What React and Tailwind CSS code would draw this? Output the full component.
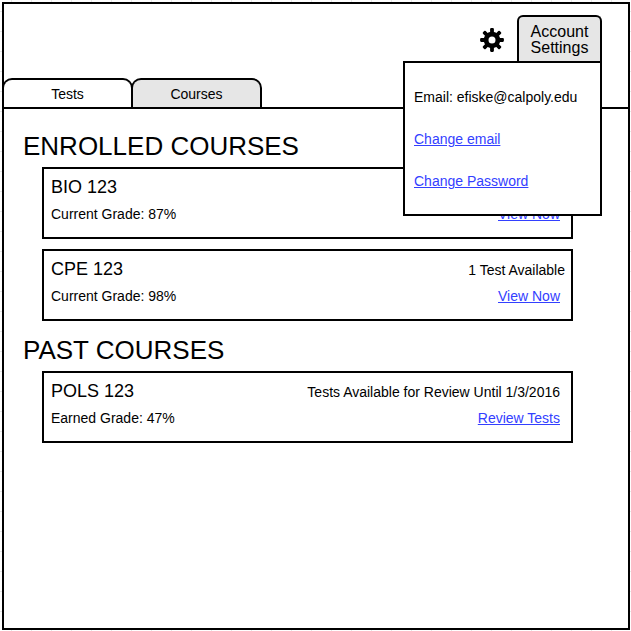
const enrolled = [
  { name: "BIO 123", grade: "Current Grade: 87%", action: "View Now" },
  { name: "CPE 123", grade: "Current Grade: 98%", note: "1 Test Available", action: "View Now" },
];

const past = [
  {
    name: "POLS 123",
    grade: "Earned Grade: 47%",
    note: "Tests Available for Review Until 1/3/2016",
    noteInset: true,
    action: "Review Tests",
  },
];

const linkStyle = "text-[#3340ff] underline underline-offset-1";

function GearIcon() {
  return (
    <svg width="24" height="24" viewBox="0 0 24 24" aria-hidden="true">
      <circle cx="12" cy="12" r="5.9" fill="none" stroke="black" strokeWidth="4.8" />
      {[0, 45, 90, 135, 180, 225, 270, 315].map((angle) => (
        <rect
          key={angle}
          x="10.1"
          y="0.1"
          width="3.8"
          height="6"
          rx="1.1"
          transform={`rotate(${angle} 12 12)`}
        />
      ))}
    </svg>
  );
}

function CourseCard({ course }) {
  return (
    <li className="flex h-[72px] flex-col gap-1.5 border-2 border-black bg-white pt-[7px] pr-1.5 pl-[7px]">
      <div className="flex items-baseline justify-between">
        <h3 className="text-lg/[22px]">{course.name}</h3>
        {course.note && <p className={course.noteInset ? "pr-[5px]" : ""}>{course.note}</p>}
      </div>
      <div className="flex items-baseline justify-between pr-[5px]">
        <p>{course.grade}</p>
        <a href="#" className={linkStyle}>
          {course.action}
        </a>
      </div>
    </li>
  );
}

function CourseSection({ title, courses }) {
  return (
    <section>
      <h2 className="text-[26px]/[30px]">{title}</h2>
      <ul className="mt-1.5 ml-[19px] flex flex-col gap-2.5">
        {courses.map((course) => (
          <CourseCard key={course.name} course={course} />
        ))}
      </ul>
    </section>
  );
}

function AccountMenu() {
  return (
    <div className="relative">
      <button
        type="button"
        aria-expanded="true"
        className="flex h-[46px] w-[85px] justify-center rounded-t-md border-2 border-b-0 border-black bg-[#e6e6e6] pt-[7px] text-base/4"
      >
        <span>
          Account
          <br />
          Settings
        </span>
      </button>
      <div className="absolute top-full right-0 z-10 flex w-[199px] flex-col items-start gap-[22px] border-2 border-black bg-white px-[9px] pt-6 pb-[23px] whitespace-nowrap">
        <p>Email: efiske@calpoly.edu</p>
        <a href="#" className={linkStyle}>
          Change email
        </a>
        <a href="#" className={linkStyle}>
          Change Password
        </a>
      </div>
    </div>
  );
}

export default function App() {
  return (
    <div className="flex min-h-screen flex-col bg-white bg-[linear-gradient(#e8e8e8_1px,transparent_1px),linear-gradient(90deg,#e8e8e8_1px,transparent_1px)] bg-[size:20px_20px] bg-[position:11px_11px] pt-0.5 pr-px pb-px pl-0.5 font-['Liberation_Sans',Arial,sans-serif] text-sm/5 text-black">
      <div className="flex flex-1 flex-col border-2 border-black bg-white">
        <header>
          <div className="flex items-center justify-end gap-[13px] pt-[11px] pr-[26px]">
            <button type="button" aria-label="Settings" className="mt-1">
              <GearIcon />
            </button>
            <AccountMenu />
          </div>
          <nav className="mt-[17px] -ml-0.5 flex border-b-2 border-black">
            <button
              type="button"
              className="h-[29px] w-[131px] rounded-t-[10px] border-2 border-b-0 border-black bg-white"
            >
              Tests
            </button>
            <button
              type="button"
              className="-ml-0.5 h-[29px] w-[131px] rounded-t-[10px] border-2 border-b-0 border-black bg-[#e6e6e6]"
            >
              Courses
            </button>
          </nav>
        </header>
        <main className="flex flex-col gap-3.5 pt-[22px] pr-[55px] pl-[19px]">
          <CourseSection title="ENROLLED COURSES" courses={enrolled} />
          <CourseSection title="PAST COURSES" courses={past} />
        </main>
      </div>
    </div>
  );
}
